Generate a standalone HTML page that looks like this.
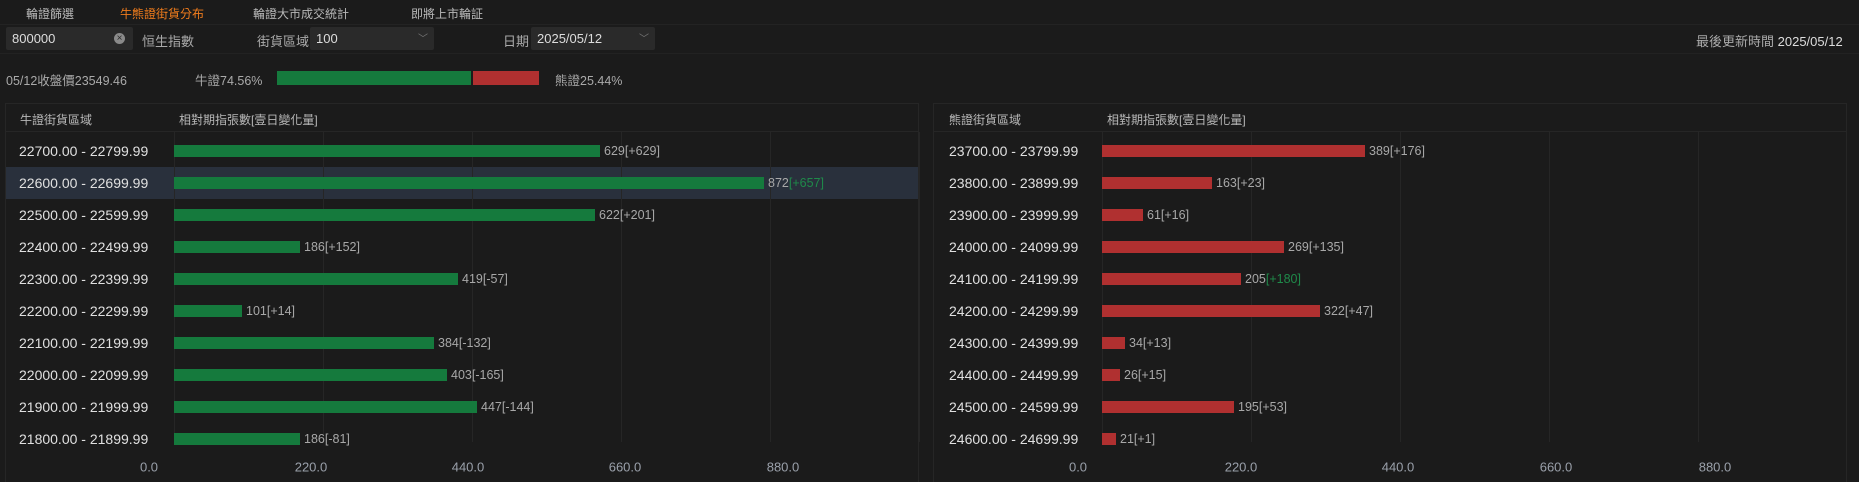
<!DOCTYPE html><html><head><meta charset="utf-8"><style>
*{margin:0;padding:0;box-sizing:border-box}
body{width:1859px;height:482px;background:#1b1b1b;font-family:"Liberation Sans","Noto Sans CJK TC",sans-serif;color:#c8c8c8;position:relative;overflow:hidden}
.a{position:absolute;white-space:nowrap}
.t{font-size:12px;color:#b8b8b8}
.box{position:absolute;background:#2a2a2a;border-radius:2px}
.pn{position:absolute;top:103px;height:379px;border:1px solid #262626;border-bottom:none}
.hd{position:absolute;left:0;right:0;top:0;height:28px;border-bottom:1px solid #262626}
.g{position:absolute;top:28px;bottom:40px;width:1px;background:#262626}
.lab{font-size:14px;color:#e0e0e0;transform:translateY(-50%)}
.bar{position:absolute;height:12px}
.v{font-size:12.5px;color:#a8a8a8;transform:translateY(-50%)}
.ax{font-size:13px;color:#9aa0aa;transform:translate(-50%,-50%)}
</style></head><body>
<div class="a" style="left:0;right:0;top:24px;height:1px;background:#232323"></div>
<div class="a t" style="left:26px;top:5px">輪證篩選</div>
<div class="a t" style="left:120px;top:5px;color:#f07c1c">牛熊證街貨分布</div>
<div class="a t" style="left:253px;top:5px">輪證大市成交統計</div>
<div class="a t" style="left:411px;top:5px">即將上市輪証</div>

<div class="box" style="left:6px;top:27px;width:127px;height:23px"></div>
<div class="a" style="left:12px;top:31px;font-size:13px;color:#ddd">800000</div>
<div class="a" style="left:114px;top:33px;width:11px;height:11px;border-radius:50%;background:#8a8a8a;color:#2a2a2a;font-size:10px;line-height:11px;text-align:center">×</div>
<div class="a" style="left:142px;top:31px;font-size:13px;color:#aaa">恒生指數</div>
<div class="a" style="left:257px;top:31px;font-size:13px;color:#aaa">街貨區域</div>
<div class="box" style="left:310px;top:27px;width:124px;height:23px"></div>
<div class="a" style="left:316px;top:31px;font-size:13px;color:#ddd">100</div>
<div class="a" style="left:418px;top:30px;font-size:10px;color:#777">﹀</div>
<div class="a" style="left:503px;top:31px;font-size:13px;color:#aaa">日期</div>
<div class="box" style="left:531px;top:27px;width:124px;height:23px"></div>
<div class="a" style="left:537px;top:31px;font-size:13px;color:#ddd">2025/05/12</div>
<div class="a" style="left:639px;top:30px;font-size:10px;color:#777">﹀</div>
<div class="a" style="left:1696px;top:31px;font-size:13px;color:#aaa">最後更新時間 <span style="color:#ddd">2025/05/12</span></div>
<div class="a" style="left:0;right:0;top:53px;height:1px;background:#222"></div>

<div class="a" style="left:6px;top:70px;font-size:12.5px;color:#aaa">05/12收盤價23549.46</div>
<div class="a" style="left:195px;top:70px;font-size:12.5px;color:#aaa">牛證74.56%</div>
<div class="a" style="left:277px;top:71px;width:194px;height:14px;background:#157a3d"></div>
<div class="a" style="left:473px;top:71px;width:66px;height:14px;background:#b03030"></div>
<div class="a" style="left:555px;top:70px;font-size:12.5px;color:#aaa">熊證25.44%</div>

<div class="pn" style="left:5px;width:914px">
<div class="hd"></div>
<div class="a t" style="left:14px;top:7px">牛證街貨區域</div>
<div class="a t" style="left:173px;top:7px">相對期指張數[壹日變化量]</div>
<div class="a" style="left:0;right:0;top:63px;height:32px;background:#29303c"></div>
<div class="g" style="left:168px"></div><div class="g" style="left:317px"></div><div class="g" style="left:466px"></div><div class="g" style="left:615px"></div><div class="g" style="left:764px"></div><div class="g" style="left:913px"></div>
</div>
<div class="pn" style="left:933px;width:914px">
<div class="hd"></div>
<div class="a t" style="left:15px;top:7px">熊證街貨區域</div>
<div class="a t" style="left:173px;top:7px">相對期指張數[壹日變化量]</div>
<div class="g" style="left:168px"></div><div class="g" style="left:317px"></div><div class="g" style="left:466px"></div><div class="g" style="left:615px"></div><div class="g" style="left:764px"></div><div class="g" style="left:912px"></div>
</div>

<div id="rows"></div>
<script>
var L=[["22700.00 - 22799.99",629,"+629"],["22600.00 - 22699.99",872,"+657",1],["22500.00 - 22599.99",622,"+201"],["22400.00 - 22499.99",186,"+152"],["22300.00 - 22399.99",419,"-57"],["22200.00 - 22299.99",101,"+14"],["22100.00 - 22199.99",384,"-132"],["22000.00 - 22099.99",403,"-165"],["21900.00 - 21999.99",447,"-144"],["21800.00 - 21899.99",186,"-81"]];
var R=[["23700.00 - 23799.99",389,"+176"],["23800.00 - 23899.99",163,"+23"],["23900.00 - 23999.99",61,"+16"],["24000.00 - 24099.99",269,"+135"],["24100.00 - 24199.99",205,"+180",1],["24200.00 - 24299.99",322,"+47"],["24300.00 - 24399.99",34,"+13"],["24400.00 - 24499.99",26,"+15"],["24500.00 - 24599.99",195,"+53"],["24600.00 - 24699.99",21,"+1"]];
var h="";
function side(d,lx,bx,col){d.forEach(function(r,i){var y=151+32*i,w=Math.round(r[1]*0.677);
h+='<div class="a lab" style="left:'+lx+'px;top:'+y+'px">'+r[0]+'</div>';
h+='<div class="bar" style="left:'+bx+'px;top:'+(y-6)+'px;width:'+w+'px;background:'+col+'"></div>';
h+='<div class="a v" style="left:'+(bx+w+4)+'px;top:'+y+'px">'+r[1]+'<span style="color:'+(r[3]?'#1f8a4a':'#a8a8a8')+'">['+r[2]+']</span></div>';});}
side(L,19,174,"#157a3d");side(R,949,1102,"#b03030");
[[149,"0.0"],[311,"220.0"],[468,"440.0"],[625,"660.0"],[783,"880.0"],[1078,"0.0"],[1241,"220.0"],[1398,"440.0"],[1556,"660.0"],[1715,"880.0"]].forEach(function(a){h+='<div class="a ax" style="left:'+a[0]+'px;top:467px">'+a[1]+'</div>';});
document.getElementById("rows").innerHTML=h;
</script>
</body></html>
